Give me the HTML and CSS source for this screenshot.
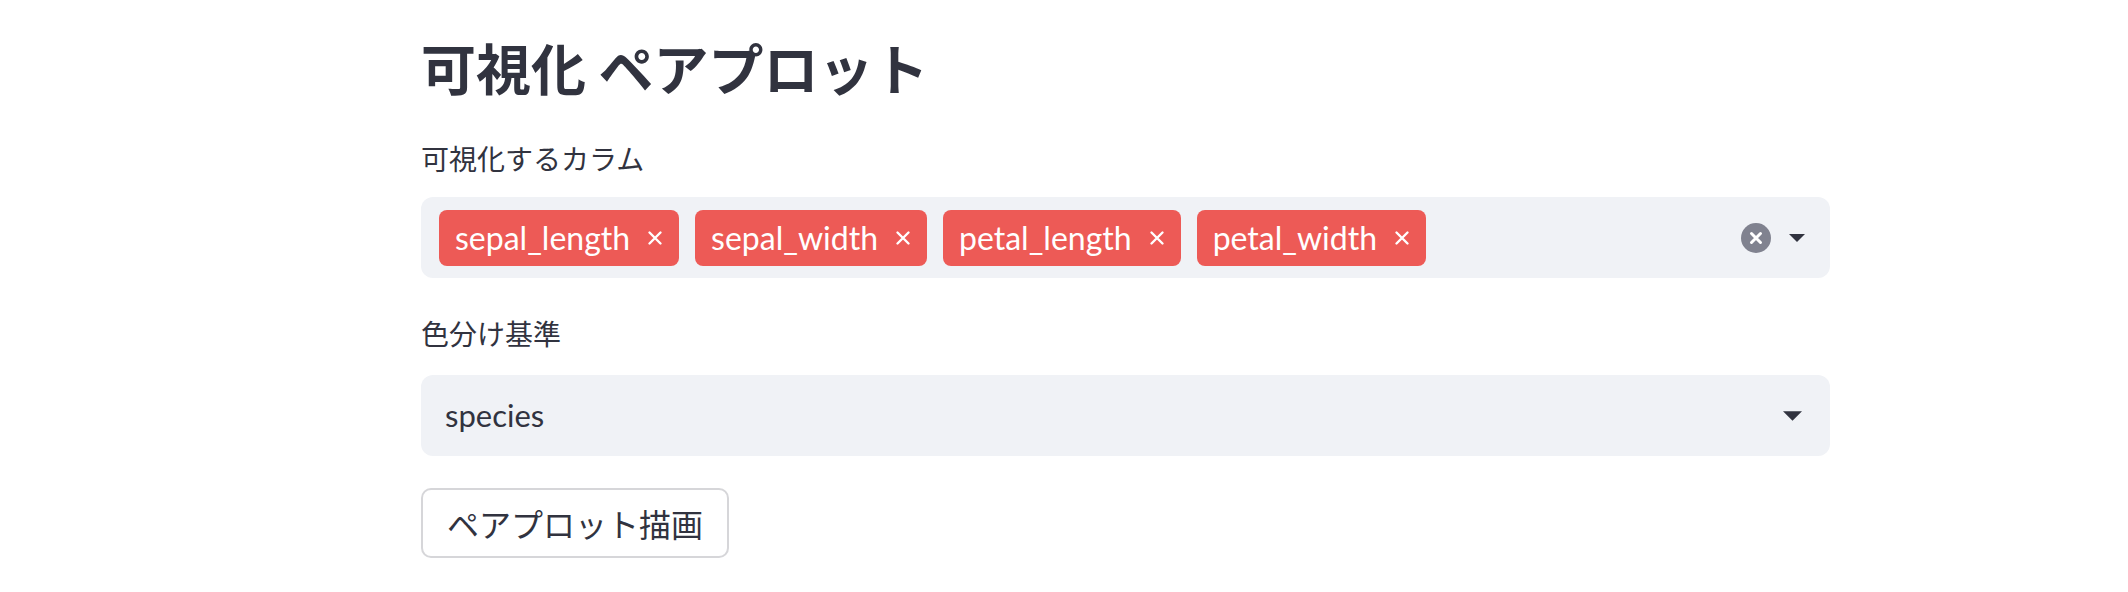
FILE: index.html
```html
<!DOCTYPE html>
<html lang="ja">
<head>
<meta charset="utf-8">
<title>可視化 ペアプロット</title>
<link rel="stylesheet" href="styles.css">
</head>
<body>
<main class="main">
  <h2 class="title">可視化 ペアプロット</h2>

  <div class="label label-first">可視化するカラム</div>
  <div class="box multi">
    <div class="tags">
      <span class="tag">sepal_length<svg class="tag-x" viewBox="0 0 16 16"><path d="M2.5 2.5L13.5 13.5M13.5 2.5L2.5 13.5"/></svg></span>
      <span class="tag">sepal_width<svg class="tag-x" viewBox="0 0 16 16"><path d="M2.5 2.5L13.5 13.5M13.5 2.5L2.5 13.5"/></svg></span>
      <span class="tag">petal_length<svg class="tag-x" viewBox="0 0 16 16"><path d="M2.5 2.5L13.5 13.5M13.5 2.5L2.5 13.5"/></svg></span>
      <span class="tag">petal_width<svg class="tag-x" viewBox="0 0 16 16"><path d="M2.5 2.5L13.5 13.5M13.5 2.5L2.5 13.5"/></svg></span>
    </div>
    <div class="controls">
      <svg class="clear" viewBox="0 0 30 30"><circle cx="15" cy="15" r="15"/><path d="M10.5 10.5L19.5 19.5M19.5 10.5L10.5 19.5"/></svg>
      <svg class="arrow" viewBox="0 0 16 8"><path d="M0 0H16L8 8Z"/></svg>
    </div>
  </div>

  <div class="label label-second">色分け基準</div>
  <div class="box single">
    <span class="value">species</span>
    <svg class="arrow arrow-single" viewBox="0 0 16 8"><path d="M0 0H16L8 8Z"/></svg>
  </div>

  <div class="actions">
    <button class="btn">ペアプロット描画</button>
  </div>
</main>
</body>
</html>
```

FILE: styles.css
```css
html, body {
  margin: 0;
  padding: 0;
  background: #ffffff;
}

body {
  font-family: Lato, "Noto Sans CJK JP", sans-serif;
  color: #31333f;
}

.main {
  margin-left: 421px;
  width: 1409px;
  padding-top: 35px;
  display: flex;
  flex-direction: column;
}

.title {
  margin: 0;
  font-family: "Noto Sans CJK JP", sans-serif;
  font-size: 55px;
  line-height: 62px;
  font-weight: 700;
}

.label {
  font-family: "Noto Sans CJK JP", sans-serif;
  font-size: 28px;
  line-height: 40px;
  font-weight: 400;
}

.label-first {
  margin-top: 41px;
  margin-bottom: 19px;
}

.label-second {
  margin-top: 35px;
  margin-bottom: 22px;
}

.box {
  box-sizing: border-box;
  height: 81px;
  background: #f0f2f6;
  border-radius: 12px;
  display: flex;
  align-items: center;
}

.multi {
  padding: 0 25px 0 18px;
}

.tags {
  flex: 1;
  display: flex;
  gap: 16px;
}

.tag {
  box-sizing: border-box;
  height: 56px;
  padding: 0 16px;
  background: #ed5a56;
  color: #ffffff;
  border-radius: 8px;
  display: flex;
  align-items: center;
  gap: 17px;
  font-size: 32px;
  line-height: 1;
}

.tag-x {
  width: 16px;
  height: 16px;
  fill: none;
  stroke: #ffffff;
  stroke-width: 2.4;
  stroke-linecap: round;
}

.controls {
  display: flex;
  align-items: center;
  gap: 18px;
}

.clear {
  width: 30px;
  height: 30px;
}

.clear circle {
  fill: #80828f;
}

.clear path {
  fill: none;
  stroke: #ffffff;
  stroke-width: 3;
  stroke-linecap: round;
}

.arrow {
  width: 16px;
  height: 8px;
  fill: #31333f;
}

.single {
  padding: 0 28px 0 24px;
  justify-content: space-between;
}

.value {
  font-size: 31px;
  line-height: 1;
}

.arrow-single {
  width: 19px;
  height: 10px;
}

.actions {
  margin-top: 32px;
  display: flex;
}

.btn {
  box-sizing: border-box;
  height: 70px;
  padding: 0 24px;
  background: #ffffff;
  border: 2px solid rgba(49, 51, 63, 0.2);
  border-radius: 10px;
  font-family: "Noto Sans CJK JP", sans-serif;
  font-size: 32px;
  color: #31333f;
  line-height: 1;
}
```
